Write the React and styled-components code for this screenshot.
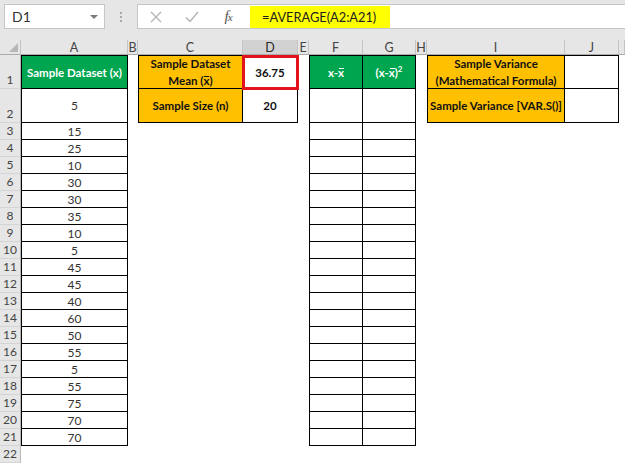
import React from "react";
import styled, { createGlobalStyle } from "styled-components";

const GlobalStyle = createGlobalStyle`
  html, body {
    margin: 0;
    padding: 0;
    background: #fff;
  }
  body {
    width: 625px;
    height: 463px;
    overflow: hidden;
    font-family: Lato, "Liberation Sans", sans-serif;
  }
`;

const COLS = ["A", "B", "C", "D", "E", "F", "G", "H", "I", "J", ""];
const VALUES = [5, 15, 25, 10, 30, 30, 35, 10, 5, 45, 45, 40, 60, 50, 55, 5, 55, 75, 70, 70];

const Bar = ({ children }) => <Over>{children}</Over>;

// returns the content + style of one cell
const cellFor = (row, col) => {
  if (col === "A" && row <= 21) {
    if (row === 1) return { text: "Sample Dataset (x)", fill: "green", top: true, left: true };
    return { text: VALUES[row - 2], left: true };
  }
  if ((col === "C" || col === "D") && row <= 2) {
    const left = col === "C";
    const top = row === 1;
    if (col === "C" && row === 1)
      return { text: <>Sample Dataset<br />Mean (<Bar>x</Bar>)</>, fill: "gold", left, top };
    if (col === "C") return { text: "Sample Size (n)", fill: "gold", left, top };
    if (row === 1) return { text: "36.75", bold: true, top, selected: true };
    return { text: "20", bold: true, top };
  }
  if ((col === "F" || col === "G") && row <= 21) {
    const left = col === "F";
    const top = row === 1;
    if (row === 1 && col === "F") return { text: <>x-<Bar>x</Bar></>, fill: "green", left, top };
    if (row === 1) return { text: <>(x-<Bar>x</Bar>)<Sup>2</Sup></>, fill: "green", left, top };
    return { text: "", left, top };
  }
  if ((col === "I" || col === "J") && row <= 2) {
    const left = col === "I";
    const top = row === 1;
    if (col === "I" && row === 1)
      return { text: <>Sample Variance<br />(Mathematical Formula)</>, fill: "gold", left, top };
    if (col === "I") return { text: "Sample Variance [VAR.S()]", fill: "gold", left, top };
    return { text: "", left, top };
  }
  return null;
};

export default function App() {
  const rows = Array.from({ length: 22 }, (_, i) => i + 1);
  return (
    <>
      <GlobalStyle />
      <Window>
        <FormulaBar>
          <NameBox>
            D1
            <Caret />
          </NameBox>
          <Grip>
            <i />
            <i />
            <i />
          </Grip>
          <InputBox>
            <ToolButton>
              <svg width="12" height="12" viewBox="0 0 12 12">
                <path d="M1 1 L11 11 M11 1 L1 11" stroke="#b3b3b3" strokeWidth="1.3" fill="none" />
              </svg>
            </ToolButton>
            <ToolButton>
              <svg width="14" height="12" viewBox="0 0 14 12">
                <path d="M1 6.5 L5 10.5 L13 1" stroke="#b3b3b3" strokeWidth="1.4" fill="none" />
              </svg>
            </ToolButton>
            <ToolButton>
              <Fx>
                f<small>x</small>
              </Fx>
            </ToolButton>
            <Formula>=AVERAGE(A2:A21)</Formula>
          </InputBox>
        </FormulaBar>

        <Sheet>
          <Corner>
            <svg width="9" height="9" viewBox="0 0 9 9">
              <path d="M9 0 L9 9 L0 9 Z" fill="#b7b7b7" />
            </svg>
          </Corner>
          {COLS.map((c, i) => (
            <ColHead key={i} $active={c === "D"}>
              {c}
            </ColHead>
          ))}

          {rows.map((r) => (
            <React.Fragment key={r}>
              <RowHead>{r}</RowHead>
              {COLS.map((c, i) => {
                const cell = cellFor(r, c);
                if (!cell) return <Cell key={i} />;
                return (
                  <Cell
                    key={i}
                    $boxed
                    $top={cell.top}
                    $left={cell.left}
                    $fill={cell.fill}
                    $bold={cell.bold || !!cell.fill}
                    $selected={cell.selected}
                  >
                    <span>{cell.text}</span>
                  </Cell>
                );
              })}
            </React.Fragment>
          ))}
        </Sheet>
      </Window>
    </>
  );
}

const Window = styled.div`
  width: 625px;
  height: 463px;
  display: flex;
  flex-direction: column;
  background: #fff;
  overflow: hidden;
`;

const FormulaBar = styled.div`
  height: 40px;
  flex: none;
  box-sizing: border-box;
  padding: 4px 0 0 4px;
  background: #e6e6e6;
  display: flex;
  align-items: flex-start;
`;

const NameBox = styled.div`
  width: 101px;
  height: 25px;
  box-sizing: border-box;
  background: #fff;
  border: 1px solid #c6c6c6;
  display: flex;
  align-items: center;
  justify-content: space-between;
  padding: 0 6px 0 7px;
  font-size: 14px;
  color: #333;
`;

const Caret = styled.span`
  width: 0;
  height: 0;
  border-left: 4px solid transparent;
  border-right: 4px solid transparent;
  border-top: 4px solid #7a7a7a;
`;

const Grip = styled.div`
  width: 32px;
  height: 25px;
  display: flex;
  flex-direction: column;
  align-items: center;
  justify-content: center;
  gap: 2px;

  i {
    width: 2px;
    height: 2px;
    background: #a8a8a8;
  }
`;

const InputBox = styled.div`
  flex: 1;
  height: 25px;
  margin-right: -2px;
  box-sizing: border-box;
  background: #fff;
  border: 1px solid #c6c6c6;
  display: flex;
  align-items: center;
`;

const ToolButton = styled.div`
  width: 36px;
  height: 100%;
  display: flex;
  align-items: center;
  justify-content: center;
`;

const Fx = styled.span`
  font-family: "Liberation Serif", serif;
  font-style: italic;
  font-size: 15px;
  color: #555;
  letter-spacing: -1px;

  small {
    font-size: 11px;
  }
`;

const Formula = styled.div`
  margin-left: 4px;
  width: 140px;
  height: 22px;
  box-sizing: border-box;
  padding-left: 12px;
  background: #ffff00;
  display: flex;
  align-items: center;
  font-size: 12.8px;
  color: #222;
  white-space: nowrap;
`;

const Sheet = styled.div`
  flex: 1;
  display: grid;
  grid-template-columns: 21px 107px 10px 105px 55px 11px 54px 53px 11px 138px 54px 1fr;
  grid-template-rows: 15px 34px 34px repeat(20, 17px);
`;

const Corner = styled.div`
  background: #e6e6e6;
  border-right: 1px solid #c4c4c4;
  border-bottom: 1px solid #ababab;
  box-sizing: border-box;
  display: flex;
  align-items: flex-end;
  justify-content: flex-end;
  padding: 0 2px 2px 0;
`;

const ColHead = styled.div`
  background: ${(p) => (p.$active ? "#d2d2d2" : "#e6e6e6")};
  border-right: 1px solid #c4c4c4;
  border-bottom: 1px solid #ababab;
  box-sizing: border-box;
  display: flex;
  align-items: center;
  justify-content: center;
  font-size: 12.5px;
  color: ${(p) => (p.$active ? "#262626" : "#444")};
`;

const RowHead = styled.div`
  background: #e6e6e6;
  border-right: 1px solid #b8b8b8;
  border-bottom: 1px solid #d4d4d4;
  box-sizing: border-box;
  display: flex;
  align-items: flex-end;
  justify-content: center;
  font-size: 12px;
  line-height: 16px;
  color: #444;
`;

const Cell = styled.div`
  position: relative;
  box-sizing: border-box;
  display: flex;
  align-items: center;
  justify-content: center;
  text-align: center;
  font-size: ${(p) => (p.$bold ? "11.5px" : "12px")};
  line-height: 17px;
  font-weight: ${(p) => (p.$bold ? 700 : 400)};
  color: ${(p) => (p.$fill === "green" ? "#fff" : p.$bold ? "#111" : "#333")};
  background: ${(p) =>
    p.$fill === "green" ? "#00a54f" : p.$fill === "gold" ? "#ffc000" : "#fff"};
  border-right: ${(p) => (p.$boxed ? "1px solid #000" : "none")};
  border-bottom: ${(p) => (p.$boxed ? "1px solid #000" : "none")};
  border-top: ${(p) => (p.$top ? "1px solid #000" : "none")};
  border-left: ${(p) => (p.$left ? "1px solid #000" : "none")};
  white-space: nowrap;

  ${(p) =>
    p.$selected &&
    `
    &::after {
      content: "";
      position: absolute;
      top: -1px;
      left: -1px;
      right: -2px;
      bottom: -2px;
      border: 3px solid #e3131b;
      z-index: 2;
    }
  `}
`;

const Over = styled.span`
  position: relative;

  &::after {
    content: "";
    position: absolute;
    left: 1px;
    right: 0;
    top: 2px;
    height: 1px;
    background: currentColor;
  }
`;

const Sup = styled.sup`
  font-size: 8px;
  line-height: 0;
  vertical-align: 5px;
`;
